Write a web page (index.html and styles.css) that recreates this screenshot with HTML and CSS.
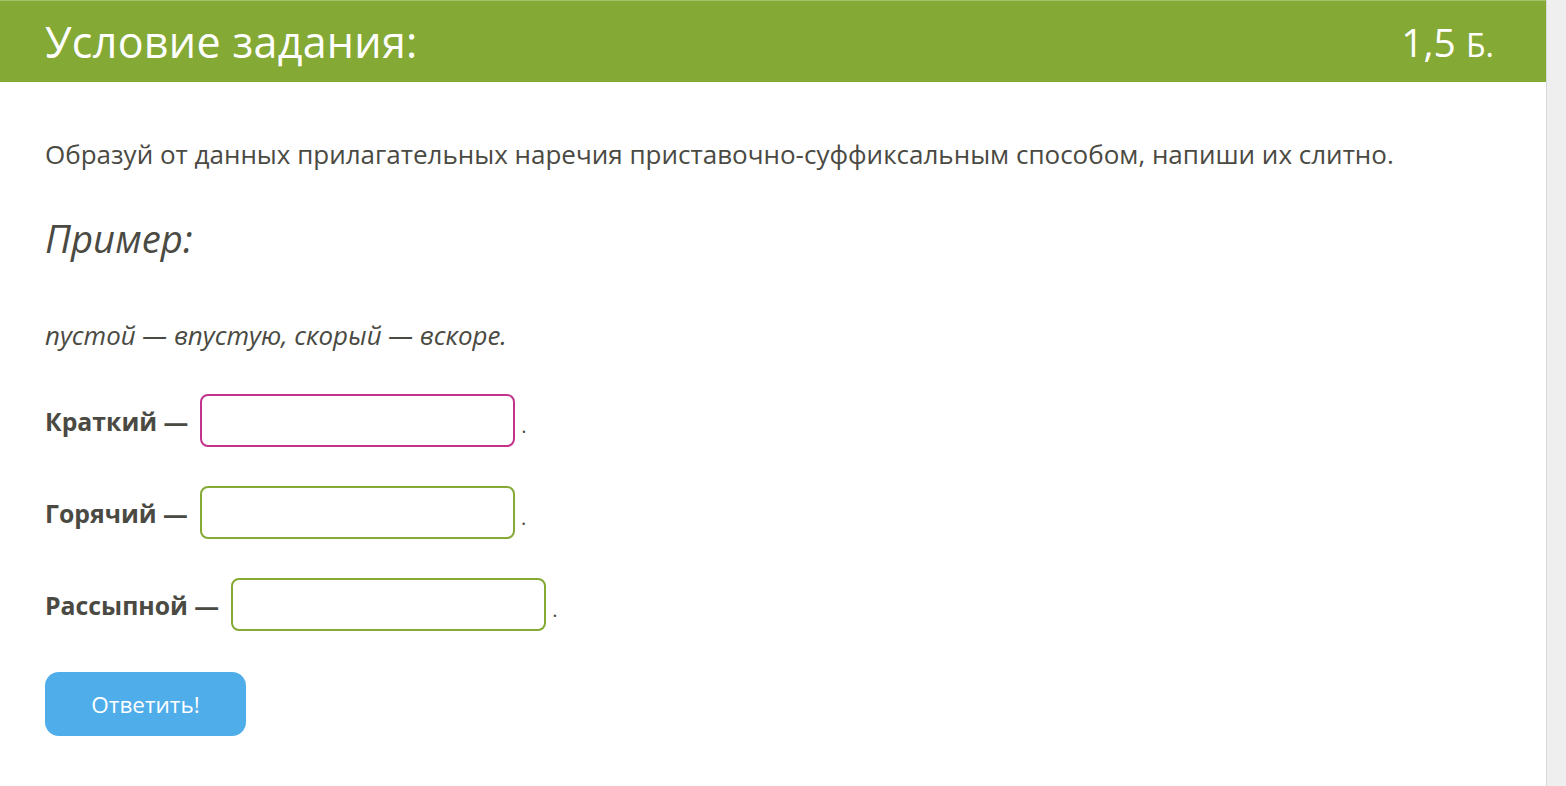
FILE: index.html
```html
<!DOCTYPE html>
<html lang="ru">
<head>
<meta charset="utf-8">
<title>Условие задания</title>
<link rel="stylesheet" href="styles.css">
</head>
<body>
<div class="page">
  <main class="panel">
    <header class="head">
      <h1 class="title">Условие задания:</h1>
      <div class="score"><span class="num">1,5</span> <span class="unit">Б.</span></div>
    </header>
    <section class="content">
      <p class="task">Образуй от данных прилагательных наречия приставочно-суффиксальным способом, напиши их слитно.</p>
      <h2 class="example-title">Пример:</h2>
      <p class="example">пустой — впустую, скорый — вскоре.</p>
      <div class="rows">
        <div class="row"><span class="label">Краткий —</span><input class="field field-active" type="text"><span class="dot">.</span></div>
        <div class="row"><span class="label">Горячий —</span><input class="field" type="text"><span class="dot">.</span></div>
        <div class="row"><span class="label">Рассыпной —</span><input class="field" type="text"><span class="dot">.</span></div>
      </div>
      <button class="btn" type="button">Ответить!</button>
    </section>
  </main>
</div>
</body>
</html>
```
FILE: styles.css
```css
html, body {
  margin: 0;
  padding: 0;
}
body {
  background: #efefef;
  font-family: "Open Sans", "Noto Sans", sans-serif;
  color: #4a4a43;
}
.page {
  display: flex;
  min-height: 786px;
}
.panel {
  width: 1546px;
  background: #ffffff;
  border-right: 1px solid #d9d9d9;
  min-height: 786px;
}
.head {
  height: 81px;
  border-top: 1px solid #a6c06a;
  background: #84a935;
  display: flex;
  align-items: center;
  justify-content: space-between;
  padding: 0 52px 0 45px;
  color: #ffffff;
}
.title {
  margin: 0;
  font-weight: 400;
  font-size: 43px;
  line-height: 1;
  letter-spacing: 0.3px;
}
.score {
  font-size: 39px;
  line-height: 1;
}
.score .unit {
  font-size: 32px;
}
.content {
  padding: 0 45px;
  display: flex;
  flex-direction: column;
  align-items: flex-start;
}
.task {
  margin: 54px 0 0;
  font-size: 26px;
  line-height: 36px;
}
.example-title {
  margin: 43px 0 0;
  font-size: 38.3px;
  font-style: italic;
  font-weight: 400;
  line-height: 47px;
}
.example {
  margin: 55px 0 0;
  font-size: 25.9px;
  font-style: italic;
  line-height: 36px;
}
.rows {
  margin-top: 41px;
  display: flex;
  flex-direction: column;
  gap: 39px;
}
.row {
  display: flex;
  align-items: center;
  font-size: 24.8px;
}
.label {
  font-weight: 700;
  margin-right: 12px;
}
.field {
  width: 315px;
  height: 53px;
  box-sizing: border-box;
  border: 2px solid #84a935;
  border-radius: 8px;
  background: #fff;
  padding: 0 10px;
  font: inherit;
  outline: none;
}
.field-active {
  border-color: #c2338c;
}
.dot {
  margin-left: 6px;
  align-self: center;
  padding-top: 10px;
  font-size: 20px;
}
.btn {
  margin-top: 41px;
  width: 201px;
  height: 64px;
  border: none;
  border-radius: 14px;
  background: #4fadea;
  color: #ffffff;
  font-family: "Open Sans", "Noto Sans", sans-serif;
  font-size: 22.5px;
  font-weight: 400;
  cursor: pointer;
}
```
